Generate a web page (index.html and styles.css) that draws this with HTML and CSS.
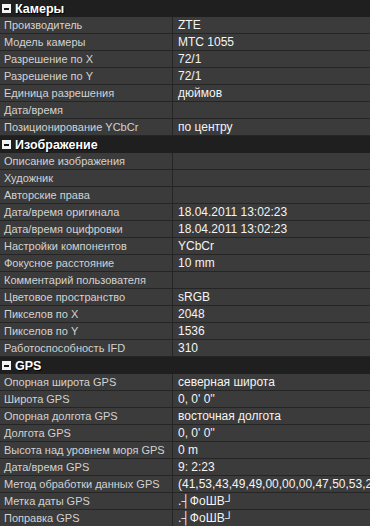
FILE: index.html
```html
<!DOCTYPE html>
<html lang="ru">
<head>
<meta charset="utf-8">
<link rel="stylesheet" href="styles.css">
</head>
<body>
<div class="grid">
  <div class="head"><span class="box"></span>Камеры</div>
  <div class="row"><div class="k">Производитель</div><div class="v">ZTE</div></div>
  <div class="row"><div class="k">Модель камеры</div><div class="v">MTC 1055</div></div>
  <div class="row"><div class="k">Разрешение по X</div><div class="v">72/1</div></div>
  <div class="row"><div class="k">Разрешение по Y</div><div class="v">72/1</div></div>
  <div class="row"><div class="k">Единица разрешения</div><div class="v">дюймов</div></div>
  <div class="row"><div class="k">Дата/время</div><div class="v"></div></div>
  <div class="row"><div class="k">Позиционирование YCbCr</div><div class="v">по центру</div></div>

  <div class="head"><span class="box"></span>Изображение</div>
  <div class="row"><div class="k">Описание изображения</div><div class="v"></div></div>
  <div class="row"><div class="k">Художник</div><div class="v"></div></div>
  <div class="row"><div class="k">Авторские права</div><div class="v"></div></div>
  <div class="row"><div class="k">Дата/время оригинала</div><div class="v">18.04.2011 13:02:23</div></div>
  <div class="row"><div class="k">Дата/время оцифровки</div><div class="v">18.04.2011 13:02:23</div></div>
  <div class="row"><div class="k">Настройки компонентов</div><div class="v">YCbCr</div></div>
  <div class="row"><div class="k">Фокусное расстояние</div><div class="v">10 mm</div></div>
  <div class="row"><div class="k">Комментарий пользователя</div><div class="v"></div></div>
  <div class="row"><div class="k">Цветовое пространство</div><div class="v">sRGB</div></div>
  <div class="row"><div class="k">Пикселов по X</div><div class="v">2048</div></div>
  <div class="row"><div class="k">Пикселов по Y</div><div class="v">1536</div></div>
  <div class="row"><div class="k">Работоспособность IFD</div><div class="v">310</div></div>

  <div class="head"><span class="box"></span>GPS</div>
  <div class="row"><div class="k">Опорная широта GPS</div><div class="v">северная широта</div></div>
  <div class="row"><div class="k">Широта GPS</div><div class="v">0, 0' 0''</div></div>
  <div class="row"><div class="k">Опорная долгота GPS</div><div class="v">восточная долгота</div></div>
  <div class="row"><div class="k">Долгота GPS</div><div class="v">0, 0' 0''</div></div>
  <div class="row"><div class="k">Высота над уровнем моря GPS</div><div class="v">0 m</div></div>
  <div class="row"><div class="k">Дата/время GPS</div><div class="v">9: 2:23</div></div>
  <div class="row"><div class="k">Метод обработки данных GPS</div><div class="v">(41,53,43,49,49,00,00,00,47,50,53,20,4e,00)</div></div>
  <div class="row"><div class="k">Метка даты GPS</div><div class="v">.┤ФоШВ┘</div></div>
  <div class="row"><div class="k">Поправка GPS</div><div class="v">.┤ФоШВ┘</div></div>
</div>
</body>
</html>
```
FILE: styles.css
```css
html, body {
  margin: 0;
  padding: 0;
  background: #1f1f1f;
  overflow: hidden;
}
.grid {
  width: 370px;
  font-family: "Liberation Sans", "DejaVu Sans", sans-serif;
  font-size: 12px;
}
.head {
  height: 17px;
  line-height: 16px;
  background: #1f1f1f;
  color: #ffffff;
  font-weight: bold;
  font-size: 12.5px;
  display: flex;
  align-items: center;
  gap: 4px;
  padding-left: 2px;
  text-shadow: 1px 1px 0 #000;
}
.box {
  width: 9px;
  height: 9px;
  background: #f2f2f2;
  display: flex;
  align-items: center;
  justify-content: center;
}
.box::after {
  content: "";
  width: 5px;
  height: 2px;
  background: #111;
}
.row {
  display: grid;
  grid-template-columns: 173px 1fr;
  height: 16px;
  border-bottom: 1px solid #252525;
  background: #3b3b3b;
}
.k, .v {
  line-height: 17px;
  white-space: nowrap;
  overflow: hidden;
  min-width: 0;
}
.k {
  color: #d2d2d2;
  font-size: 11px;
  padding-left: 4px;
  border-right: 1px solid #252525;
}
.v {
  color: #f4f4f4;
  padding-left: 5px;
}
```
